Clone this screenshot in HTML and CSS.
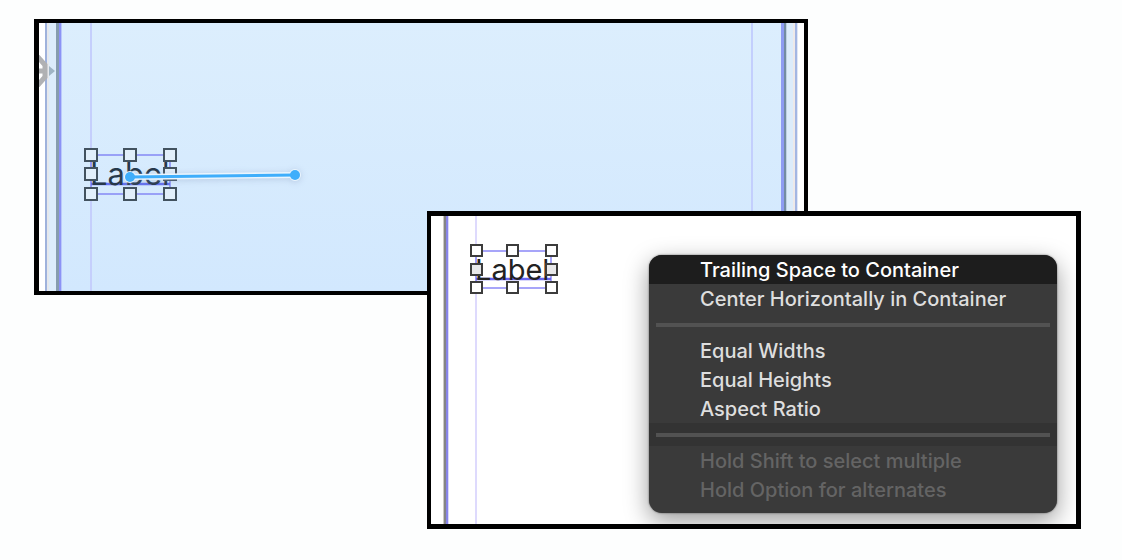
FILE: index.html
```html
<!DOCTYPE html>
<html lang="en">
<head>
<meta charset="utf-8">
<title>Adding a constraint</title>
<link rel="stylesheet" href="styles.css">
</head>
<body>
<main class="stage">
  <section class="panel panel-drag">
    <svg class="entry" width="18" height="32" viewBox="0 0 18 32" aria-hidden="true">
      <path d="M-2 1L6 10V22L-2 31M-1 16H7" fill="none" stroke="#b0b1b3" stroke-width="5"/>
      <path d="M10 11L16 16L10 21Z" fill="#9fb4c4"/>
    </svg>
    <svg class="selection selection-drag" width="240" height="60" viewBox="0 0 240 60">
      <g fill="none" stroke="#8589f5" stroke-width="1.5"><path d="M11 10H90V49H11Z"/><path d="M11 39H90" stroke="#6470f0" stroke-width="2.5"/></g>
      <text class="caption" x="10" y="40" font-size="31" fill="#26384a">Label</text>
      <g fill="#e1effb" stroke="#42525f" stroke-width="2">
        <rect x="5" y="4" width="12" height="12"/><rect x="44" y="4" width="12" height="12"/><rect x="84" y="4" width="12" height="12"/>
        <rect x="5" y="23" width="12" height="12"/><rect x="84" y="23" width="12" height="12"/>
        <rect x="5" y="43" width="12" height="12"/><rect x="44" y="43" width="12" height="12"/><rect x="84" y="43" width="12" height="12"/>
      </g>
      <g class="drag-line" stroke="#eaf5fe" stroke-width="6"><path d="M50 32L215 30"/><circle cx="50" cy="32" r="3"/><circle cx="215" cy="30" r="3"/></g>
      <path d="M50 32L215 30" stroke="#3faefb" stroke-width="3"/>
      <circle cx="50" cy="32" r="5" fill="#3faefb"/><circle cx="215" cy="30" r="5" fill="#3faefb"/>
    </svg>
  </section>
  <section class="panel panel-menu">
    <svg class="selection selection-menu" width="100" height="60" viewBox="0 0 100 60">
      <g fill="none" stroke="#8a88f7" stroke-width="1.5"><path d="M10 10H85V47H10Z"/><path d="M10 38H85" stroke="#6864f0" stroke-width="2.5"/></g>
      <text class="caption" x="9" y="39" font-size="29" fill="#222">Label</text>
      <g fill="#fff" stroke="#3c3c3c" stroke-width="2">
        <rect x="5" y="4" width="11" height="11"/><rect x="41" y="4" width="11" height="11"/><rect x="80" y="4" width="11" height="11"/>
        <rect x="5" y="23" width="11" height="11" fill="#e8e8ea"/><rect x="80" y="23" width="11" height="11" fill="#e8e8ea"/>
        <rect x="5" y="41" width="11" height="11"/><rect x="41" y="41" width="11" height="11"/><rect x="80" y="41" width="11" height="11"/>
      </g>
    </svg>
    <div class="menu" role="menu">
      <button class="item selected" role="menuitem">Trailing Space to Container</button>
      <button class="item" role="menuitem">Center Horizontally in Container</button>
      <div class="divider" role="separator"></div>
      <button class="item" role="menuitem">Equal Widths</button>
      <button class="item" role="menuitem">Equal Heights</button>
      <button class="item" role="menuitem">Aspect Ratio</button>
      <div class="divider shaded" role="separator"></div>
      <button class="item" role="menuitem" disabled>Hold Shift to select multiple</button>
      <button class="item" role="menuitem" disabled>Hold Option for alternates</button>
    </div>
  </section>
</main>
</body>
</html>
```
FILE: styles.css
```css
* { box-sizing: border-box; }

body {
  margin: 0;
  background: #fdfefe;
  font-family: Inter, "Liberation Sans", sans-serif;
}

.stage {
  display: grid;
  grid-template-columns: 393fr 381fr 273fr;
  grid-template-rows: 192px 84px auto;
  padding: 19px 41px 31px 34px;
}

.panel {
  position: relative;
  border: 4px solid #000;
}

.panel-drag {
  grid-area: 1 / 1 / 3 / 3;
  border-left-width: 5px;
  background:
    linear-gradient(90deg, #fff 6px, #9fb2dc 6px 8px, #e6e8ec 8px 10px, #dcecfb 10px 17px, #869cae 17px 20px, #8c93f5 20px 22px, #bac8fb 22px 23px, transparent 23px 51px, #c5cffc 51px 53px, transparent 53px) left / 53px 100% no-repeat,
    linear-gradient(90deg, transparent 2px, #c3cffd 2px 4px, transparent 4px 32px, #8e9cf2 32px 35px, #738ca3 35px 37px, #bfd2e2 37px 38px, #dcecfb 38px 44px, #eee9e9 44px 46px, #a3b6e3 46px 48px, #dfe6f6 48px 49px, #fff 49px) right / 55px 100% no-repeat,
    linear-gradient(#dceefd, #d2e8fe);
}

.panel-menu {
  grid-area: 2 / 2 / 4 / 4;
  display: flex;
  justify-content: flex-end;
  border-width: 5px 5px 5px 4px;
  padding: 39px 19px 11px;
  background:
    linear-gradient(90deg, transparent 12px, #ccc9c4 12px 13px, #858585 13px 15px, #8885e8 15px 17px, #dad8fd 17px 18px, transparent 18px 44px, #dedafd 44px 46px, transparent 46px) left / 46px 100% no-repeat,
    #fff;
  overflow: hidden;
}

.entry { position: absolute; left: 0; top: 32px; }
.selection { position: absolute; }
.selection-drag { left: 41px; top: 122px; }
.selection-menu { left: 35px; top: 25px; }
.drag-line { filter: drop-shadow(0 1px 3px #8899bb66); }

.menu {
  width: 408px;
  padding-bottom: 9px;
  border-radius: 13px;
  overflow: hidden;
  background: #3a3a3a;
  box-shadow: 0 0 2px #0009, 0 8px 24px #0006;
}

.item {
  display: block;
  width: 100%;
  height: 29px;
  padding: 2px 0 0 51px;
  border: 0;
  background: none;
  color: #dedede;
  font: 500 20px/27px Inter, "Liberation Sans", sans-serif;
  text-align: left;
}

.item.selected { background: #1d1d1d; color: #fff; }
.item:disabled { color: #646464; }

.divider {
  padding: 10px 7px 9px;
}

.divider::before {
  content: "";
  display: block;
  height: 4px;
  background: #525252;
}

.divider.shaded { background: #333; }
```
